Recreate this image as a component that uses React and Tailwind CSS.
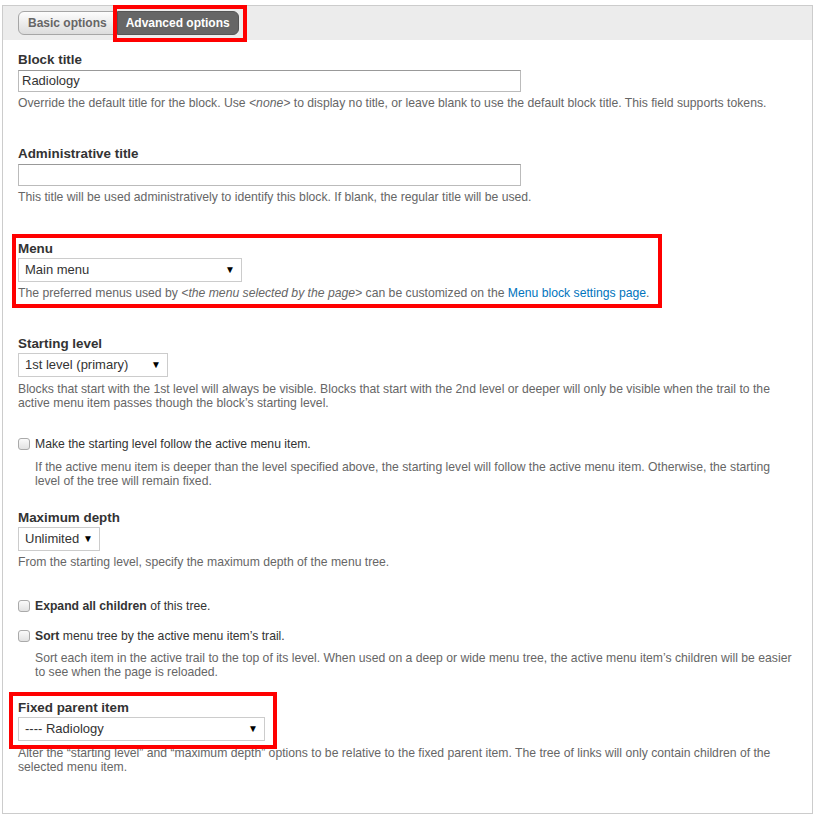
import React from 'react'

const font = { fontFamily: '"Liberation Sans", Arial, sans-serif' }

function Label({ children }) {
  return <div className="text-[13.4px] leading-[16px] font-bold text-[#333]">{children}</div>
}

function Help({ children, className = '' }) {
  return <div className={`text-[12.2px] leading-[14px] text-[#666] ${className}`}>{children}</div>
}

function TextInput({ value }) {
  return (
    <div className="mt-[2px] w-[503px] h-[22px] border border-[#bbb] border-t-[#999] bg-white px-[3px] text-[13px] leading-[20px] text-[#333]">
      {value}
    </div>
  )
}

function Select({ value, width }) {
  return (
    <div
      className={`mt-[1px] ${width} h-[24px] border border-[#ccc] bg-white pl-[6px] pr-[6px] flex items-center justify-between text-[13px] text-[#333]`}
    >
      <span>{value}</span>
      <span className="text-[10px] text-black leading-none">▼</span>
    </div>
  )
}

function Checkbox({ children }) {
  return (
    <div className="flex items-center gap-[5px] text-[12.2px] leading-[16px] text-[#333]">
      <span className="w-[12px] h-[12px] rounded-[3px] border border-[#aaa] bg-gradient-to-b from-[#fafafa] to-[#e2e2e2]" />
      <span>{children}</span>
    </div>
  )
}

export default function App() {
  return (
    <div className="bg-white w-[815px] h-[818px] pt-[5px] pl-[2px]" style={font}>
      <div className="w-[811px] h-[809px] border border-[#ccc]">
        {/* tabs */}
        <div className="h-[34px] bg-[#ececec] pt-[5px] pl-[15px] flex">
          <div className="h-[24px] px-[9px] border border-[#a6a6a6] rounded-l-[6px] bg-gradient-to-b from-[#fdfdfd] to-[#dcdcdc] text-[12px] font-bold text-[#666] leading-[22px]">
            Basic options
          </div>
          <div className="relative h-[24px] px-[8px] border border-[#555] rounded-r-[6px] bg-[#666] text-[12px] font-bold text-white leading-[22px]">
            Advanced options
            <div className="absolute left-[-5px] right-[-9px] top-[-7px] bottom-[-8px] border-4 border-[#f00]" />
          </div>
        </div>

        <div className="pl-[15px] pr-[14px] pt-[12px]">
          <Label>Block title</Label>
          <TextInput value="Radiology" />
          <Help className="mt-[4px]">
            Override the default title for the block. Use <em>&lt;none&gt;</em> to display no title, or leave blank to use the default block title. This field supports tokens.
          </Help>

          <div className="mt-[36px]">
            <Label>Administrative title</Label>
            <TextInput value="" />
            <Help className="mt-[4px]">
              This title will be used administratively to identify this block. If blank, the regular title will be used.
            </Help>
          </div>

          <div className="relative mt-[37px]">
            <Label>Menu</Label>
            <Select value="Main menu" width="w-[224px]" />
            <Help className="mt-[4px]">
              The preferred menus used by <em>&lt;the menu selected by the page&gt;</em> can be customized on the{' '}
              <a className="text-[#0074bd]">Menu block settings page</a>.
            </Help>
            <div className="absolute left-[-6px] top-[-7px] w-[650px] h-[74px] border-4 border-[#f00]" />
          </div>

          <div className="mt-[36px]">
            <Label>Starting level</Label>
            <Select value="1st level (primary)" width="w-[150px]" />
            <Help className="mt-[5px]">
              Blocks that start with the 1st level will always be visible. Blocks that start with the 2nd level or deeper will only be visible when the trail to the active menu item passes though the block’s starting level.
            </Help>
          </div>

          <div className="mt-[26px]">
            <Checkbox>Make the starting level follow the active menu item.</Checkbox>
            <Help className="mt-[8px] pl-[17px]">
              If the active menu item is deeper than the level specified above, the starting level will follow the active menu item. Otherwise, the starting level of the tree will remain fixed.
            </Help>
          </div>

          <div className="mt-[22px]">
            <Label>Maximum depth</Label>
            <Select value="Unlimited" width="w-[82px]" />
            <Help className="mt-[4px]">From the starting level, specify the maximum depth of the menu tree.</Help>
          </div>

          <div className="mt-[29px]">
            <Checkbox>
              <b>Expand all children</b> of this tree.
            </Checkbox>
          </div>

          <div className="mt-[14px]">
            <Checkbox>
              <b>Sort</b> menu tree by the active menu item’s trail.
            </Checkbox>
            <Help className="mt-[7px] pl-[17px]">
              Sort each item in the active trail to the top of its level. When used on a deep or wide menu tree, the active menu item’s children will be easier to see when the page is reloaded.
            </Help>
          </div>

          <div className="mt-[21px]">
            <div className="relative">
              <Label>Fixed parent item</Label>
              <Select value="---- Radiology" width="w-[247px]" />
              <div className="absolute left-[-9px] top-[-8px] w-[268px] h-[57px] border-4 border-[#f00]" />
            </div>
            <Help className="mt-[5px]">
              Alter the “starting level” and “maximum depth” options to be relative to the fixed parent item. The tree of links will only contain children of the selected menu item.
            </Help>
          </div>
        </div>
      </div>
    </div>
  )
}
